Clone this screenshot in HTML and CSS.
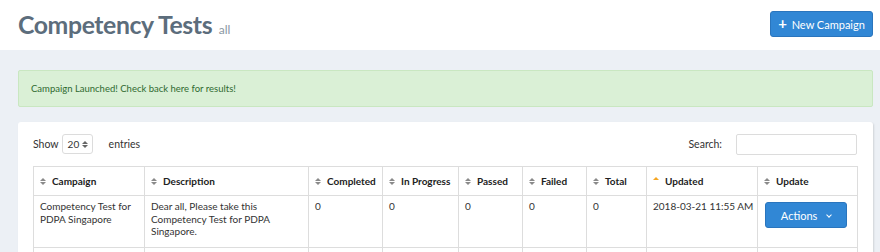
FILE: index.html
```html
<!DOCTYPE html>
<html lang="en">
<head>
    <meta charset="UTF-8">
    <title>Competency Tests</title>
    <link rel="stylesheet" href="styles.css">
</head>
<body>
    <div class="page-header">
        <h1 class="page-title">Competency Tests <small>all</small></h1>
        <button class="btn btn-primary"><span class="plus">+</span> New Campaign</button>
    </div>

    <div class="content">
        <div class="alert">Campaign Launched! Check back here for results!</div>

        <div class="card">
            <div class="table-tools">
                <div class="length">
                    Show
                    <span class="select">20 <span class="updown"><i class="up"></i><i class="down"></i></span></span>
                    entries
                </div>
                <div class="search">
                    Search: <span class="search-input"></span>
                </div>
            </div>

            <table class="grid">
                <thead>
                    <tr>
                        <th class="c-campaign"><span class="sort"><i class="up"></i><i class="down"></i></span>Campaign</th>
                        <th class="c-desc"><span class="sort"><i class="up"></i><i class="down"></i></span>Description</th>
                        <th class="c-completed"><span class="sort"><i class="up"></i><i class="down"></i></span>Completed</th>
                        <th class="c-progress"><span class="sort"><i class="up"></i><i class="down"></i></span>In Progress</th>
                        <th class="c-passed"><span class="sort"><i class="up"></i><i class="down"></i></span>Passed</th>
                        <th class="c-failed"><span class="sort"><i class="up"></i><i class="down"></i></span>Failed</th>
                        <th class="c-total"><span class="sort"><i class="up"></i><i class="down"></i></span>Total</th>
                        <th class="c-updated"><span class="sort active"><i class="up"></i></span>Updated</th>
                        <th class="c-update"><span class="sort"><i class="up"></i><i class="down"></i></span>Update</th>
                    </tr>
                </thead>
                <tbody>
                    <tr>
                        <td>Competency Test for PDPA Singapore</td>
                        <td>Dear all, Please take this Competency Test for PDPA Singapore.</td>
                        <td>0</td>
                        <td>0</td>
                        <td>0</td>
                        <td>0</td>
                        <td>0</td>
                        <td class="nowrap">2018-03-21 11:55 AM</td>
                        <td><button class="btn btn-actions">Actions <span class="caret"></span></button></td>
                    </tr>
                    <tr class="empty-row">
                        <td></td><td></td><td></td><td></td><td></td><td></td><td></td><td></td><td></td>
                    </tr>
                </tbody>
            </table>
        </div>
    </div>
</body>
</html>
```

FILE: styles.css
```css
body {
    margin: 0;
    padding: 0;
    background: #ecf0f5;
    font-family: Lato, "Open Sans", sans-serif;
    font-size: 10.5px;
    color: #333333;
    overflow: hidden;
}

.page-header {
    background: #ffffff;
    height: 50px;
    padding: 0 7px 0 18px;
    display: flex;
    align-items: center;
    justify-content: space-between;
}

.page-title {
    margin: 0;
    font-size: 24.8px;
    font-weight: 700;
    color: #5c6d7c;
    letter-spacing: -0.4px;
    padding-bottom: 2px;
}

.page-title small {
    font-size: 12px;
    font-weight: 400;
    color: #8a97a3;
    letter-spacing: 0;
    margin-left: 1px;
}

.btn {
    border: 1px solid #2a75bd;
    border-radius: 3px;
    background: #3187d5;
    color: #ffffff;
    font-family: inherit;
    cursor: pointer;
}

.btn-primary {
    height: 26px;
    width: 103px;
    padding: 0;
    font-size: 11px;
    margin-bottom: 2px;
}

.plus {
    font-size: 15px;
    font-weight: 700;
    line-height: 12px;
    margin-right: 2px;
}

.content {
    padding: 20px 7px 0 18px;
}

.alert {
    background: #daf0d6;
    border: 1px solid #c9e7c1;
    color: #2f6a30;
    font-size: 9.5px;
    height: 37px;
    line-height: 35px;
    padding: 0 12px;
    box-sizing: border-box;
    border-radius: 2px;
}

.card {
    margin-top: 15px;
    background: #ffffff;
    border-radius: 3px;
    box-shadow: 1px 1px 2px rgba(0, 0, 0, 0.12);
    padding: 12px 16px 0 15px;
    height: 200px;
}

.table-tools {
    display: flex;
    justify-content: space-between;
    align-items: center;
    height: 20px;
    margin-bottom: 12px;
}

.length {
    display: flex;
    align-items: center;
}

.select {
    display: inline-flex;
    align-items: center;
    height: 20px;
    width: 31px;
    box-sizing: border-box;
    border: 1px solid #dcdcdc;
    border-radius: 3px;
    padding: 0 0 0 5px;
    margin: 0 16px 0 3px;
    font-size: 10px;
}

.updown {
    display: inline-flex;
    flex-direction: column;
    margin-left: 3px;
    gap: 1px;
}

.updown i, .sort i {
    display: block;
    width: 0;
    height: 0;
    border-left: 3px solid transparent;
    border-right: 3px solid transparent;
}

.updown .up {
    border-bottom: 3px solid #666666;
}

.updown .down {
    border-top: 3px solid #666666;
}

.search {
    display: flex;
    align-items: center;
}

.search-input {
    display: inline-block;
    width: 121px;
    height: 21px;
    box-sizing: border-box;
    border: 1px solid #dcdcdc;
    border-radius: 2px;
    margin-left: 14px;
}

.grid {
    width: 100%;
    border-collapse: collapse;
    table-layout: fixed;
}

.grid th, .grid td {
    box-sizing: border-box;
    border: 1px solid #dddddd;
    text-align: left;
    vertical-align: top;
}

.grid th {
    height: 29px;
    padding: 0 6px;
    vertical-align: middle;
    font-weight: 700;
    color: #222222;
    white-space: nowrap;
    font-size: 10px;
}

.grid td {
    padding: 4px 6px 0 6px;
    height: 52px;
    line-height: 12.7px;
    font-size: 10px;
}

.grid td.nowrap {
    white-space: nowrap;
}

.grid .empty-row td {
    height: 20px;
}

.sort {
    display: inline-flex;
    flex-direction: column;
    gap: 1px;
    margin-right: 6px;
    vertical-align: middle;
    position: relative;
    top: -1px;
}

.sort .up {
    border-bottom: 3px solid #8a8a8a;
}

.sort .down {
    border-top: 3px solid #8a8a8a;
}

.sort.active {
    top: -4px;
}

.sort.active .up {
    border-bottom-color: #f5a623;
}

.c-campaign { width: 111px; }
.c-desc { width: 164px; }
.c-completed { width: 74px; }
.c-progress { width: 76px; }
.c-passed { width: 64px; }
.c-failed { width: 64px; }
.c-total { width: 60px; }
.c-updated { width: 111px; }
.c-update { width: 100px; }

.btn-actions {
    width: 82px;
    height: 26px;
    margin-top: 2px;
    margin-left: 1px;
    font-size: 11px;
}

.caret {
    display: inline-block;
    width: 3px;
    height: 3px;
    border-right: 1.5px solid #ffffff;
    border-bottom: 1.5px solid #ffffff;
    transform: rotate(45deg);
    margin-left: 7px;
    position: relative;
    top: -3px;
}
```
